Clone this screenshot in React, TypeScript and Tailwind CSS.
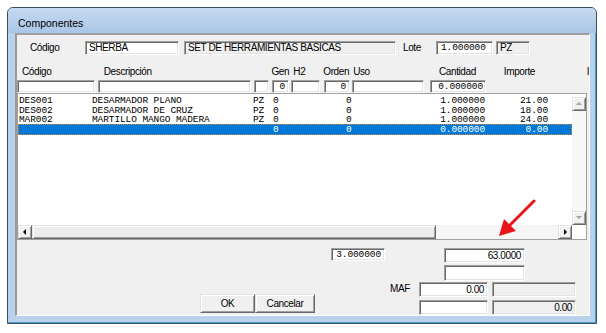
import React from "react";

const narrow = "font-['Liberation_Sans',Arial,sans-serif] text-[10px] tracking-[-0.4px] text-black";
const mono = "font-['Liberation_Mono','DejaVu_Sans_Mono',monospace] text-[9.5px] tracking-[-0.1px]";
const sunk =
  "border border-t-[#a0a0a0] border-l-[#a0a0a0] border-b-white border-r-white shadow-[inset_1px_1px_0_#696969,inset_-1px_-1px_0_#e3e3e3]";
const raised =
  "border border-t-[#e3e3e3] border-l-[#e3e3e3] border-b-[#696969] border-r-[#696969] shadow-[inset_1px_1px_0_#ffffff,inset_-1px_-1px_0_#a0a0a0]";

type Row = { code: string; desc: string; u: string; gen: string; ord: string; cant: string; imp: string };
const rows: Row[] = [
  { code: "DES001", desc: "DESARMADOR PLANO", u: "PZ", gen: "0", ord: "0", cant: "1.000000", imp: "21.00" },
  { code: "DES002", desc: "DESARMADOR DE CRUZ", u: "PZ", gen: "0", ord: "0", cant: "1.000000", imp: "18.00" },
  { code: "MAR002", desc: "MARTILLO MANGO MADERA", u: "PZ", gen: "0", ord: "0", cant: "1.000000", imp: "24.00" },
];

function Tri({ dir, color }: { dir: "up" | "down" | "left" | "right"; color: string }) {
  const pts =
    dir === "up" ? "1,5 7,5 4,2" : dir === "down" ? "1,2 7,2 4,5" : dir === "left" ? "5,1 5,7 2,4" : "3,1 3,7 6,4";
  return (
    <svg width="8" height="8" viewBox="0 0 8 8">
      <polygon points={pts} fill={color} />
    </svg>
  );
}

function DataRow({ r, sel, h }: { r: Row; sel?: boolean; h: string }) {
  return (
    <div
      className={`flex items-center overflow-hidden ${h} ${mono} leading-[9px] ${
        sel ? "bg-[#0078d7] text-white outline-1 outline-dotted outline-[#d08a3a] -outline-offset-1" : "text-black"
      }`}
    >
      <div className="w-[73px] pl-[1px] whitespace-pre">{r.code}</div>
      <div className="w-[161px] pl-[1px] whitespace-pre">{r.desc}</div>
      <div className="w-[20px] pl-[1px]">{r.u}</div>
      <div className="w-[46px] pl-[1px]">{r.gen}</div>
      <div className="w-[40px] pl-[28px]">{r.ord}</div>
      <div className="w-[127px] text-right">{r.cant}</div>
      <div className="w-[63px] text-right">{r.imp}</div>
    </div>
  );
}

export default function App() {
  return (
    <div className="relative w-[606px] h-[333px] bg-white overflow-hidden">
      <div className="ml-[7px] mt-[7px] w-[590px] h-[317px] rounded-t-[6px] border border-[#3c4d60] bg-[#b9d1ea] flex flex-col overflow-hidden shadow-[inset_-1px_-1px_0_#4aa0c0]">
        {/* title */}
        <div className="h-[25px] bg-linear-to-b from-[#c6daf0] to-[#a9c6e7] pl-[10px] pt-[9px] leading-[12px] font-['Liberation_Sans',Arial,sans-serif] text-[10.5px] text-black">
          Componentes
        </div>
        <div className="flex">
          <div className="w-[7px]" />
          {/* client */}
          <div className="w-[575px] h-[283px] bg-[#f0f0f0] border-t-2 border-l-2 border-t-[#a0a0a0] border-l-[#9a9a9a] border-r border-b border-r-[#fdfdfd] border-b-white flex flex-col">
            {/* row 1 */}
            <div className={`mt-[6px] h-[14px] flex ${narrow}`}>
              <div className="w-[68px] pl-[13px] leading-[14px]">Código</div>
              <div className={`w-[94px] h-[14px] bg-white ${sunk} pl-[3px] leading-[12px]`}>SHERBA</div>
              <div className={`ml-[5px] w-[212px] h-[14px] bg-[#f0f0f0] ${sunk} pl-[3px] leading-[12px]`}>
                SET DE HERRAMIENTAS BASICAS
              </div>
              <div className="w-[40px] pl-[7px] leading-[14px]">Lote</div>
              <div className={`w-[57px] h-[14px] bg-white ${sunk} pl-[4px] leading-[12px] ${mono} text-black`}>1.000000</div>
              <div className={`ml-[3px] w-[34px] h-[14px] bg-[#f0f0f0] ${sunk} pl-[3px] leading-[12px]`}>PZ</div>
            </div>
            {/* header row */}
            <div className={`h-[25px] flex pt-[10px] leading-[13px] ${narrow}`}>
              <div className="w-[87px] pl-[5px]">Código</div>
              <div className="w-[168px]">Descripción</div>
              <div className="w-[22px]">Gen</div>
              <div className="w-[30px]">H2</div>
              <div className="w-[30px]">Orden</div>
              <div className="w-[86px]">Uso</div>
              <div className="w-[65px]">Cantidad</div>
              <div className="w-[83px]">Importe</div>
              <div>I</div>
            </div>
            {/* filter row */}
            <div className={`h-[13px] flex ${mono} text-black`}>
              <div className={`w-[78px] h-[13px] bg-white ${sunk}`} />
              <div className={`ml-[3px] w-[153px] h-[13px] bg-white ${sunk}`} />
              <div className={`ml-[3px] w-[15px] h-[13px] bg-white ${sunk}`} />
              <div className={`ml-[3px] w-[17px] h-[13px] bg-white ${sunk} text-right pr-[3px] leading-[11px]`}>0</div>
              <div className={`ml-[2px] w-[29px] h-[13px] bg-white ${sunk}`} />
              <div className={`ml-[4px] w-[26px] h-[13px] bg-white ${sunk} text-right pr-[3px] leading-[11px]`}>0</div>
              <div className={`ml-[2px] w-[72px] h-[13px] bg-white ${sunk}`} />
              <div className={`ml-[6px] w-[56px] h-[13px] bg-white ${sunk} text-right pr-[2px] leading-[11px]`}>0.000000</div>
            </div>
            {/* grid */}
            <div className="w-[570px] h-[147px] border border-[#a0a0a0] bg-white flex flex-col">
              <div className="flex h-[131px]">
                <div className="w-[554px] flex flex-col pt-[1px]">
                  <DataRow r={rows[0]} h="h-[10px]" />
                  <DataRow r={rows[1]} h="h-[10px]" />
                  <DataRow r={rows[2]} h="h-[9px]" />
                  <DataRow
                    r={{ code: "", desc: "", u: "", gen: "0", ord: "0", cant: "0.000000", imp: "0.00" }}
                    sel
                    h="h-[11px]"
                  />
                </div>
                <div className="w-[14px] flex flex-col bg-white">
                  <div className="h-[3px]" />
                  <div className={`h-[14px] bg-[#f0f0f0] ${raised} flex items-center justify-center`}>
                    <Tri dir="up" color="#a3a3a3" />
                  </div>
                  <div className="flex-1 bg-[#f7f7f7]" />
                  <div className={`h-[14px] bg-[#f0f0f0] ${raised} flex items-center justify-center`}>
                    <Tri dir="down" color="#a3a3a3" />
                  </div>
                </div>
              </div>
              <div className="flex h-[14px]">
                <div className={`w-[14px] bg-[#f0f0f0] ${raised} flex items-center justify-center`}>
                  <Tri dir="left" color="#000" />
                </div>
                <div className={`w-[404px] bg-[#ececec] ${raised}`} />
                <div className="w-[122px] bg-[#f6f6f6]" />
                <div className={`w-[14px] bg-[#f0f0f0] ${raised} flex items-center justify-center`}>
                  <Tri dir="right" color="#000" />
                </div>
                <div className="w-[14px] bg-white" />
              </div>
            </div>
            {/* bottom section */}
            <div className={`mt-[8px] flex items-start ${narrow}`}>
              <div className={`ml-[314px] w-[54px] h-[13px] bg-white ${sunk} ${mono} text-black text-right pr-[3px] leading-[11px]`}>
                3.000000
              </div>
              <div className={`ml-[59px] w-[81px] h-[15px] bg-white ${sunk} text-right pr-[3px] leading-[13px]`}>63.0000</div>
            </div>
            <div className="mt-[2px] flex">
              <div className={`ml-[427px] w-[81px] h-[16px] bg-white ${sunk}`} />
            </div>
            <div className={`mt-[1px] flex ${narrow}`}>
              <div className="ml-[183px] mt-[12px] flex">
                <div className={`w-[55px] h-[19px] bg-[#f0f0f0] ${raised} flex items-center justify-center`}>OK</div>
                <div className={`w-[60px] h-[19px] bg-[#f0f0f0] ${raised} flex items-center justify-center`}>Cancelar</div>
              </div>
              <div className="ml-[75px] w-[29px] pt-[1px] leading-[12px]">MAF</div>
              <div className="flex flex-col gap-[3px]">
                <div className={`w-[69px] h-[15px] bg-white ${sunk} text-right pr-[3px] leading-[13px]`}>0.00</div>
                <div className={`w-[69px] h-[15px] bg-white ${sunk}`} />
              </div>
              <div className="ml-[4px] flex flex-col gap-[3px]">
                <div className={`w-[84px] h-[15px] bg-[#f0f0f0] ${sunk}`} />
                <div className={`w-[84px] h-[15px] bg-[#f0f0f0] ${sunk} text-right pr-[3px] leading-[13px]`}>0.00</div>
              </div>
            </div>
          </div>
        </div>
      </div>
      {/* red annotation arrow */}
      <svg className="absolute left-0 top-0" width="606" height="333" viewBox="0 0 606 333">
        <line x1="534" y1="201" x2="508" y2="227" stroke="#e8161b" strokeWidth="3" strokeLinecap="round" />
        <polygon points="499,236 504,219 516,231" fill="#e8161b" />
      </svg>
    </div>
  );
}
